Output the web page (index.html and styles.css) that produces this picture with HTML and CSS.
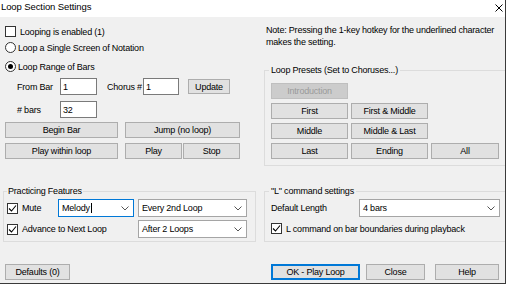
FILE: index.html
```html
<!DOCTYPE html>
<html lang="en">

<head>
    <meta charset="UTF-8">
    <title>Loop Section Settings</title>
    <link rel="stylesheet" href="styles.css">
</head>

<body>
    <div class="window">
        <div class="titlebar">
            <span class="title">Loop Section Settings</span>
            <svg class="close" width="8" height="8" viewBox="0 0 8 8">
                <path d="M0.5 0.5L7.5 7.5M7.5 0.5L0.5 7.5" stroke="#000" stroke-width="1" fill="none" />
            </svg>
        </div>

        <div class="top">
            <div class="left">
                <div class="check row-looping"><span class="box"></span>Looping is enabled (1)</div>
                <div class="radio row-single"><span class="dot"></span>Loop a Single Screen of Notation</div>
                <div class="radio checked row-range"><span class="dot"></span>Loop Range of Bars</div>

                <div class="field-row row-from">
                    <span class="lbl lbl-bar">From Bar</span>
                    <input type="text" class="input in-bar" value="1">
                    <span class="lbl lbl-chorus">Chorus #</span>
                    <input type="text" class="input in-chorus" value="1">
                    <button class="btn btn-update">Update</button>
                </div>
                <div class="field-row row-bars">
                    <span class="lbl lbl-bar"># bars</span>
                    <input type="text" class="input in-bar" value="32">
                </div>

                <div class="btn-row row-b1">
                    <button class="btn w-wide">Begin Bar</button>
                    <button class="btn w-jump">Jump (no loop)</button>
                </div>
                <div class="btn-row row-b2">
                    <button class="btn w-wide">Play within loop</button>
                    <button class="btn w-half">Play</button>
                    <button class="btn w-half stop">Stop</button>
                </div>
            </div>

            <div class="right">
                <p class="note">Note: Pressing the 1-key hotkey for the underlined character<br>makes the setting.</p>
                <fieldset class="group presets">
                    <legend>Loop Presets (Set to Choruses...)</legend>
                    <div class="preset-grid">
                        <button class="btn disabled">Introduction</button>
                        <span></span>
                        <span></span>
                        <button class="btn">First</button>
                        <button class="btn">First &amp; Middle</button>
                        <span></span>
                        <button class="btn">Middle</button>
                        <button class="btn">Middle &amp; Last</button>
                        <span></span>
                        <button class="btn">Last</button>
                        <button class="btn">Ending</button>
                        <button class="btn">All</button>
                    </div>
                </fieldset>
            </div>
        </div>

        <div class="groups">
            <fieldset class="group practice">
                <legend>Practicing Features</legend>
                <div class="practice-grid">
                    <div class="check on"><span class="box"><svg width="9" height="9" viewBox="0 0 9 9"><path d="M1 4.5L3.5 7L8 1.5" stroke="#000" stroke-width="1.1" fill="none" /></svg></span>Mute</div>
                    <div class="combo focus"><span>Melody<span class="caret"></span></span><svg width="8" height="5" viewBox="0 0 8 5"><path d="M0.5 0.5L4 4L7.5 0.5" stroke="#555" fill="none" /></svg></div>
                    <div class="combo"><span>Every 2nd Loop</span><svg width="8" height="5" viewBox="0 0 8 5"><path d="M0.5 0.5L4 4L7.5 0.5" stroke="#555" fill="none" /></svg></div>
                    <div class="check on span2"><span class="box"><svg width="9" height="9" viewBox="0 0 9 9"><path d="M1 4.5L3.5 7L8 1.5" stroke="#000" stroke-width="1.1" fill="none" /></svg></span>Advance to Next Loop</div>
                    <div class="combo"><span>After 2 Loops</span><svg width="8" height="5" viewBox="0 0 8 5"><path d="M0.5 0.5L4 4L7.5 0.5" stroke="#555" fill="none" /></svg></div>
                </div>
            </fieldset>

            <fieldset class="group lcmd">
                <legend>"L" command settings</legend>
                <div class="lcmd-grid">
                    <span class="lbl">Default Length</span>
                    <div class="combo"><span>4 bars</span><svg width="8" height="5" viewBox="0 0 8 5"><path d="M0.5 0.5L4 4L7.5 0.5" stroke="#555" fill="none" /></svg></div>
                    <div class="check on span2"><span class="box"><svg width="9" height="9" viewBox="0 0 9 9"><path d="M1 4.5L3.5 7L8 1.5" stroke="#000" stroke-width="1.1" fill="none" /></svg></span>L command on bar boundaries during playback</div>
                </div>
            </fieldset>
        </div>

        <div class="footer">
            <button class="btn defaults">Defaults (0)</button>
            <div class="footer-right">
                <button class="btn ok">OK - Play Loop</button>
                <button class="btn close-btn">Close</button>
                <button class="btn help">Help</button>
            </div>
        </div>
    </div>
</body>

</html>
```

FILE: styles.css
```css
body {
    margin: 0;
    padding: 0;
}

.window {
    width: 506px;
    height: 284px;
    box-sizing: border-box;
    border-right: 1px solid #3a3a3a;
    border-bottom: 1px solid #3a3a3a;
    background-color: #f0f0f0;
    font-family: "Liberation Sans", Arial, sans-serif;
    font-size: 9px;
    letter-spacing: -0.2px;
    color: #000;
    overflow: hidden;
}

.titlebar {
    height: 17px;
    background-color: #fff;
    display: flex;
    justify-content: space-between;
    align-items: flex-start;
}

.title {
    line-height: 14px;
    padding-left: 1px;
    font-size: 9.5px;
    letter-spacing: -0.1px;
}

.close {
    margin: 4px 2px 0 0;
}

.top {
    display: grid;
    grid-template-columns: 264px 1fr;
    height: 149px;
}

.left {
    padding-left: 5px;
    display: flex;
    flex-direction: column;
    align-items: flex-start;
}

/* checkboxes and radios */
.check,
.radio {
    display: flex;
    align-items: center;
    height: 13px;
    white-space: nowrap;
}

.box {
    width: 11px;
    height: 11px;
    box-sizing: border-box;
    border: 1px solid #333;
    background-color: #fff;
    margin-right: 4px;
    display: flex;
    align-items: center;
    justify-content: center;
    flex: none;
}

.dot {
    width: 11px;
    height: 11px;
    box-sizing: border-box;
    border: 1px solid #333;
    border-radius: 50%;
    background-color: #fff;
    margin-right: 2px;
    display: flex;
    align-items: center;
    justify-content: center;
    flex: none;
}

.radio.checked .dot::after {
    content: "";
    width: 5px;
    height: 5px;
    border-radius: 50%;
    background-color: #000;
}

.row-looping {
    margin-top: 8px;
}

.row-single {
    margin-top: 3px;
}

.row-range {
    margin-top: 6px;
}

/* from bar / chorus rows */
.field-row {
    display: flex;
    align-items: center;
    height: 17px;
}

.row-from {
    margin-top: 5px;
}

.row-bars {
    margin-top: 6px;
}

.lbl {
    white-space: nowrap;
}

.lbl-bar {
    margin-left: 12px;
    width: 43px;
}

.lbl-chorus {
    margin-left: 10px;
    width: 36px;
}

.input {
    height: 17px;
    box-sizing: border-box;
    border: 1px solid #7a7a7a;
    background-color: #fff;
    padding: 0 2px;
    margin: 0;
    font: inherit;
    letter-spacing: inherit;
    color: #000;
    outline: none;
}

.in-bar {
    width: 37px;
}

.in-chorus {
    width: 36px;
}

/* buttons */
.btn {
    height: 16px;
    box-sizing: border-box;
    border: 1px solid #adadad;
    background-color: #e1e1e1;
    font: inherit;
    letter-spacing: inherit;
    color: #000;
    padding: 0;
    margin: 0;
    text-align: center;
    white-space: nowrap;
}

.btn-update {
    margin-left: 9px;
    width: 42px;
    height: 15px;
}

.btn-row {
    display: flex;
    gap: 7px;
}

.row-b1 {
    margin-top: 4px;
}

.row-b2 {
    margin-top: 5px;
}

.w-wide {
    width: 113px;
}

.w-jump {
    width: 115px;
}

.w-half {
    width: 57px;
}

.stop {
    margin-left: -6px;
}

.btn.disabled {
    background-color: #cccccc;
    border-color: #bfbfbf;
    color: #9a9a9a;
}

/* right column */
.note {
    margin: 7px 0 0 2px;
    line-height: 12px;
    white-space: nowrap;
}

.group {
    margin: 0;
    border: 1px solid #dcdcdc;
    min-width: 0;
}

.group legend {
    padding: 0 2px;
    line-height: 12px;
    white-space: nowrap;
}

.presets {
    margin-top: 16px;
    border-right: none;
    padding: 7px 0 6px 6px;
}

.presets legend,
.lcmd legend {
    margin-left: -2px;
}

.preset-grid {
    display: grid;
    grid-template-columns: 77px 77px 68px;
    grid-auto-rows: 16px;
    column-gap: 3px;
    row-gap: 4px;
}

/* bottom groups */
.groups {
    display: flex;
    margin-top: 19px;
    height: 57px;
}

.practice {
    margin-left: 3px;
    width: 253px;
    box-sizing: border-box;
    padding: 2px 0 3px 3px;
}

.practice legend {
    padding: 0 1px;
}

.practice-grid {
    display: grid;
    grid-template-columns: 51px 76px 109px;
    grid-template-rows: 18px 18px;
    row-gap: 3px;
    column-gap: 0;
    align-items: center;
}

.practice-grid .combo:nth-child(3),
.practice-grid .combo:last-child {
    margin-left: 4px;
    width: 109px;
}

.span2 {
    grid-column: 1 / 3;
}

.combo {
    display: flex;
    align-items: center;
    justify-content: space-between;
    height: 18px;
    box-sizing: border-box;
    border: 1px solid #a5a5a5;
    background-color: #fff;
    padding: 0 4px 0 3px;
    white-space: nowrap;
}

.combo.focus {
    border-color: #0078d7;
}

.caret {
    display: inline-block;
    width: 1px;
    height: 10px;
    background-color: #000;
    vertical-align: -2px;
    margin-left: 1px;
}

.lcmd {
    margin-left: 8px;
    flex: 1;
    border-right: none;
    padding: 2px 0 6px 6px;
}

.lcmd-grid {
    display: grid;
    grid-template-columns: 88px 141px;
    grid-template-rows: 18px 13px;
    row-gap: 5px;
    align-items: center;
}

/* footer */
.footer {
    display: flex;
    margin-top: 22px;
}

.defaults {
    margin-left: 5px;
    width: 65px;
}

.footer-right {
    display: flex;
    margin-left: 201px;
}

.ok {
    width: 89px;
    border: 2px solid #0078d7;
}

.close-btn {
    margin-left: 6px;
    width: 59px;
}

.help {
    margin-left: 10px;
    width: 64px;
}
```
